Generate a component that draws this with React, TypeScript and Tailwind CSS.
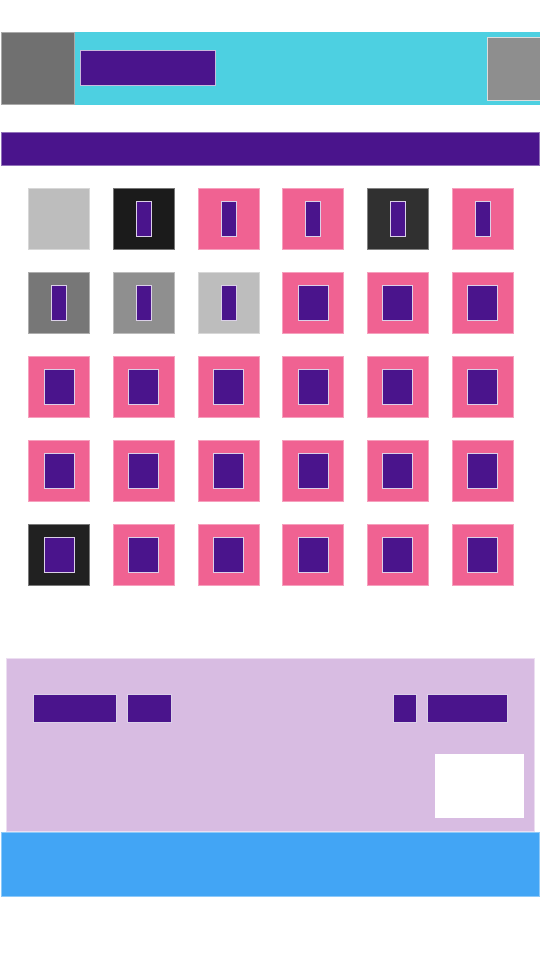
import React from "react";

type Tile = { bg: string; inner: "none" | "thin" | "wide" };

const P = "bg-[#f06292]";
const tiles: Tile[] = [
  { bg: "bg-[#bdbdbd]", inner: "none" },
  { bg: "bg-[#1b1b1b]", inner: "thin" },
  { bg: P, inner: "thin" },
  { bg: P, inner: "thin" },
  { bg: "bg-[#303030]", inner: "thin" },
  { bg: P, inner: "thin" },
  { bg: "bg-[#777777]", inner: "thin" },
  { bg: "bg-[#8f8f8f]", inner: "thin" },
  { bg: "bg-[#bdbdbd]", inner: "thin" },
  { bg: P, inner: "wide" },
  { bg: P, inner: "wide" },
  { bg: P, inner: "wide" },
  ...Array.from({ length: 12 }, () => ({ bg: P, inner: "wide" as const })),
  { bg: "bg-[#212121]", inner: "wide" },
  ...Array.from({ length: 5 }, () => ({ bg: P, inner: "wide" as const })),
];

export default function App() {
  return (
    <div className="w-[540px] h-[960px] bg-white overflow-hidden relative">
      <div className="pt-[32px]">
        <div className="flex h-[73px] overflow-hidden">
          <div className="w-[74px] ml-px bg-[#707070] border border-white/40 shrink-0" />
          <div className="flex-1 bg-[#4dd0e1] flex justify-between items-start">
            <div className="ml-[5px] mt-[18px] w-[136px] h-[36px] bg-[#4a148c] border border-white/70" />
            <div className="mt-[5px] w-[54px] h-[64px] bg-[#8e8e8e] border border-white/70 -mr-px shrink-0" />
          </div>
        </div>
        <div className="mt-[27px] ml-px h-[34px] bg-[#4a148c] border border-white/40" />
        <div className="mt-[22px] grid grid-cols-6 pl-[17px] pr-[15px] gap-y-[22px]">
          {tiles.map((t, i) => (
            <div key={i} className="flex justify-center">
              <div className={`w-[62px] h-[62px] ${t.bg} border border-white/40 flex items-center justify-center`}>
                {t.inner === "thin" && (
                  <div className="w-[16px] h-[36px] bg-[#4a148c] border border-white/80" />
                )}
                {t.inner === "wide" && (
                  <div className="w-[31px] h-[36px] bg-[#4a148c] border border-white/80" />
                )}
              </div>
            </div>
          ))}
        </div>
        <div className="mt-[72px] ml-[6px] mr-[5px] h-[174px] bg-[#d8bce2] border border-white/50 relative">
          <div className="flex justify-between items-start pt-[35px] pl-[26px] pr-[26px]">
            <div className="flex gap-[10px]">
              <div className="w-[84px] h-[29px] bg-[#4a148c] border border-white/80" />
              <div className="w-[45px] h-[29px] bg-[#4a148c] border border-white/80" />
            </div>
            <div className="flex gap-[10px]">
              <div className="w-[24px] h-[29px] bg-[#4a148c] border border-white/80" />
              <div className="w-[81px] h-[29px] bg-[#4a148c] border border-white/80" />
            </div>
          </div>
          <div className="flex justify-end pr-[10px] mt-[31px]">
            <div className="w-[89px] h-[64px] bg-white" />
          </div>
        </div>
        <div className="ml-px h-[65px] bg-[#42a5f5] border border-white/40" />
      </div>
    </div>
  );
}
